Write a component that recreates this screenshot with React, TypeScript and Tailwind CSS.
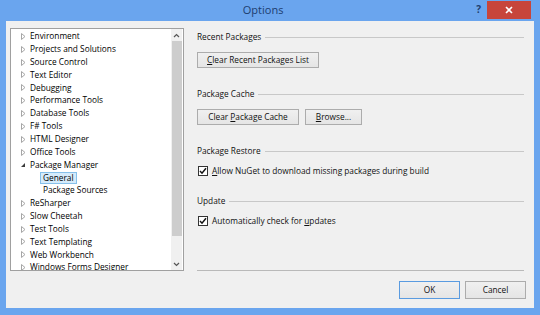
const treeItems: { label: string; level: number; state: "closed" | "open" | "leaf"; selected?: boolean }[] = [
  { label: "Environment", level: 0, state: "closed" },
  { label: "Projects and Solutions", level: 0, state: "closed" },
  { label: "Source Control", level: 0, state: "closed" },
  { label: "Text Editor", level: 0, state: "closed" },
  { label: "Debugging", level: 0, state: "closed" },
  { label: "Performance Tools", level: 0, state: "closed" },
  { label: "Database Tools", level: 0, state: "closed" },
  { label: "F# Tools", level: 0, state: "closed" },
  { label: "HTML Designer", level: 0, state: "closed" },
  { label: "Office Tools", level: 0, state: "closed" },
  { label: "Package Manager", level: 0, state: "open" },
  { label: "General", level: 1, state: "leaf", selected: true },
  { label: "Package Sources", level: 1, state: "leaf" },
  { label: "ReSharper", level: 0, state: "closed" },
  { label: "Slow Cheetah", level: 0, state: "closed" },
  { label: "Test Tools", level: 0, state: "closed" },
  { label: "Text Templating", level: 0, state: "closed" },
  { label: "Web Workbench", level: 0, state: "closed" },
  { label: "Windows Forms Designer", level: 0, state: "closed" },
];

const Arrow = ({ open }: { open: boolean }) =>
  open ? (
    <svg width="6" height="6" viewBox="0 0 6 6">
      <path d="M5 1 L5 5 L1 5 Z" fill="#3c3c3c" />
    </svg>
  ) : (
    <svg width="6" height="7" viewBox="0 0 6 7">
      <path d="M1.5 0.5 L5 3.5 L1.5 6.5 Z" fill="none" stroke="#a6a6a6" strokeWidth="1" />
    </svg>
  );

const Btn = ({ children, className = "", primary = false }: { children: React.ReactNode; className?: string; primary?: boolean }) => (
  <div
    className={`flex items-center justify-center h-[16px] border bg-gradient-to-b from-[#f0f0f0] to-[#e5e5e5] text-[#111] ${
      primary ? "border-[#5a9be0]" : "border-[#acacac]"
    } ${className}`}
  >
    {children}
  </div>
);

const Group = ({ title }: { title: string }) => (
  <div className="flex items-center gap-[4px] h-[12px]">
    <span className="text-[#111]">{title}</span>
    <div className="flex-1 border-t border-[#c8c8c8]" />
  </div>
);

const Check = () => (
  <div className="w-[10px] h-[10px] border border-[#333333] bg-white flex items-center justify-center">
    <svg width="8" height="8" viewBox="0 0 8 8">
      <path d="M1 4 L3 6.2 L7 1.2" fill="none" stroke="#111" strokeWidth="1.5" />
    </svg>
  </div>
);

export default function App() {
  return (
    <div
      className="w-[540px] h-[315px] bg-[#6aa5ee] flex flex-col overflow-hidden text-[8.3px] leading-none"
      style={{ fontFamily: '"Open Sans", "Noto Sans", sans-serif' }}
    >
      {/* Title bar */}
      <div className="h-[21px] flex items-start">
        <div className="flex-1 flex justify-center pl-[50px] pt-[4px]">
          <span className="text-[11px] text-[#1d3d6e]">Options</span>
        </div>
        <div className="pt-[4px] pr-[6px] text-[10px] font-bold text-[#1d3d6e]">?</div>
        <div className="mt-[1px] mr-[9px] w-[44px] h-[18px] bg-[#c7453b] flex items-center justify-center">
          <svg width="8" height="8" viewBox="0 0 8 8">
            <path d="M1 1 L7 7 M7 1 L1 7" stroke="white" strokeWidth="1.6" />
          </svg>
        </div>
      </div>

      {/* Client area */}
      <div className="mx-[6px] mb-[7px] flex-1 bg-[#f0f0f0] flex">
        {/* Tree */}
        <div className="ml-[4px] mt-[7px] w-[174px] h-[243px] bg-white border border-[#a0a0a0] flex overflow-hidden">
          <div className="flex-1 pt-[1px] overflow-hidden">
            {treeItems.map((it) => (
              <div key={it.label} className="h-[12.85px] flex items-center whitespace-nowrap">
                <div className="w-[19px] flex justify-end pr-[4px]">
                  {it.state !== "leaf" && <Arrow open={it.state === "open"} />}
                </div>
                {it.level === 1 ? (
                  <span
                    className={`ml-[10px] px-[2px] h-[12px] flex items-center ${
                      it.selected ? "bg-[#d5ebfb] border border-[#86c0ea]" : "border border-transparent"
                    } text-black`}
                  >
                    {it.label}
                  </span>
                ) : (
                  <span className="text-black">{it.label}</span>
                )}
              </div>
            ))}
          </div>
          {/* Scrollbar */}
          <div className="w-[12px] bg-[#f0f0f0] flex flex-col items-center border-r border-white">
            <div className="h-[12px] flex items-center justify-center">
              <svg width="7" height="5" viewBox="0 0 7 5">
                <path d="M1 4 L3.5 1.5 L6 4" fill="none" stroke="#555" strokeWidth="1.2" />
              </svg>
            </div>
            <div className="w-[10px] h-[195px] bg-[#cdcdcd]" />
            <div className="flex-1" />
            <div className="h-[12px] flex items-center justify-center">
              <svg width="7" height="5" viewBox="0 0 7 5">
                <path d="M1 1 L3.5 3.5 L6 1" fill="none" stroke="#555" strokeWidth="1.2" />
              </svg>
            </div>
          </div>
        </div>

        {/* Right panel */}
        <div className="ml-[13px] w-[327px] flex flex-col pt-[10px]">
          <Group title="Recent Packages" />
          <Btn className="mt-[9px] w-[122px]">
            <span>
              <u>C</u>lear Recent Packages List
            </span>
          </Btn>

          <div className="mt-[20px]">
            <Group title="Package Cache" />
          </div>
          <div className="mt-[9px] flex gap-[6px]">
            <Btn className="w-[102px]">
              <span>
                Clear <u>P</u>ackage Cache
              </span>
            </Btn>
            <Btn className="w-[57px]">
              <span>
                <u>B</u>rowse...
              </span>
            </Btn>
          </div>

          <div className="mt-[20px]">
            <Group title="Package Restore" />
          </div>
          <div className="mt-[9px] flex items-center gap-[4px] pl-[1px]">
            <Check />
            <span className="text-[#111]">
              <u>A</u>llow NuGet to download missing packages during build
            </span>
          </div>

          <div className="mt-[19px]">
            <Group title="Update" />
          </div>
          <div className="mt-[9px] flex items-center gap-[4px] pl-[1px]">
            <Check />
            <span className="text-[#111]">
              Automatically check for <u>u</u>pdates
            </span>
          </div>

          <div className="flex-1" />
          <div className="border-t border-[#b9b9b9] w-[327px]" />
          <div className="mt-[10px] mb-[9px] flex justify-end gap-[5px] -mr-[2px]">
            <Btn primary className="w-[61px] h-[18px]">
              OK
            </Btn>
            <Btn className="w-[61px] h-[18px]">Cancel</Btn>
          </div>
        </div>
      </div>
    </div>
  );
}
